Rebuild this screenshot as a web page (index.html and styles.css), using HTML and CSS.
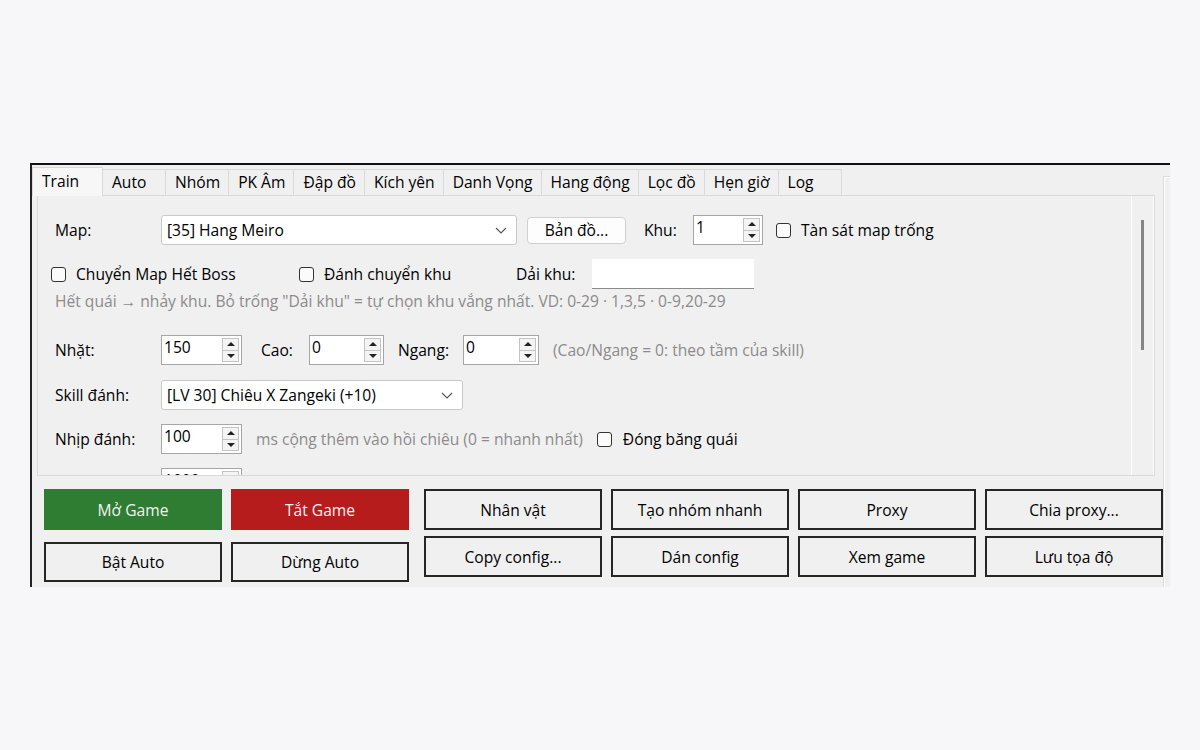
FILE: index.html
```html
<!DOCTYPE html>
<html lang="vi">
<head>
    <meta charset="UTF-8">
    <meta name="viewport" content="width=device-width, initial-scale=1.0">
    <title>Auto - Train</title>
    <link rel="stylesheet" href="styles.css">
</head>
<body>
    <div class="window">
        <div class="main">
            <div class="tabs">
                <div class="tab active">Train</div>
                <div class="tab">Auto</div>
                <div class="tab">Nhóm</div>
                <div class="tab">PK Âm</div>
                <div class="tab">Đập đồ</div>
                <div class="tab">Kích yên</div>
                <div class="tab">Danh Vọng</div>
                <div class="tab">Hang động</div>
                <div class="tab">Lọc đồ</div>
                <div class="tab">Hẹn giờ</div>
                <div class="tab">Log</div>
            </div>

            <div class="tab-panel">
                <div class="scroll-area">
                    <!-- Map -->
                    <div class="row">
                        <span class="label">Map:</span>
                        <div class="combo combo-map">
                            <span class="combo-text">[35] Hang Meiro</span>
                            <svg class="chevron" width="12" height="7" viewBox="0 0 12 7"><polyline points="1,1 6,6 11,1" fill="none" stroke="#555" stroke-width="1.1"/></svg>
                        </div>
                        <button class="small-btn">Bản đồ...</button>
                        <span class="label label-khu">Khu:</span>
                        <div class="spin spin-khu">
                            <span class="spin-value">1</span>
                            <span class="spin-buttons"><span class="spin-up"></span><span class="spin-down"></span></span>
                        </div>
                        <label class="check check-tan"><span class="box"></span>Tàn sát map trống</label>
                    </div>

                    <!-- Chuyển khu -->
                    <div class="row row-checks">
                        <label class="check check-boss"><span class="box"></span>Chuyển Map Hết Boss</label>
                        <label class="check check-khu"><span class="box"></span>Đánh chuyển khu</label>
                        <span class="label label-dai">Dải khu:</span>
                        <div class="text-field"></div>
                    </div>
                    <div class="row-hint">Hết quái → nhảy khu. Bỏ trống "Dải khu" = tự chọn khu vắng nhất. VD: 0-29 · 1,3,5 · 0-9,20-29</div>

                    <!-- Nhặt -->
                    <div class="row row-nhat">
                        <span class="label">Nhặt:</span>
                        <div class="spin spin-wide">
                            <span class="spin-value">150</span>
                            <span class="spin-buttons"><span class="spin-up"></span><span class="spin-down"></span></span>
                        </div>
                        <span class="label label-cao">Cao:</span>
                        <div class="spin spin-cao">
                            <span class="spin-value">0</span>
                            <span class="spin-buttons"><span class="spin-up"></span><span class="spin-down"></span></span>
                        </div>
                        <span class="label label-ngang">Ngang:</span>
                        <div class="spin spin-ngang">
                            <span class="spin-value">0</span>
                            <span class="spin-buttons"><span class="spin-up"></span><span class="spin-down"></span></span>
                        </div>
                        <span class="hint hint-gap">(Cao/Ngang = 0: theo tầm của skill)</span>
                    </div>

                    <!-- Skill -->
                    <div class="row row-skill">
                        <span class="label">Skill đánh:</span>
                        <div class="combo combo-skill">
                            <span class="combo-text">[LV 30] Chiêu X Zangeki (+10)</span>
                            <svg class="chevron" width="12" height="7" viewBox="0 0 12 7"><polyline points="1,1 6,6 11,1" fill="none" stroke="#555" stroke-width="1.1"/></svg>
                        </div>
                    </div>

                    <!-- Nhịp -->
                    <div class="row row-nhip">
                        <span class="label">Nhịp đánh:</span>
                        <div class="spin spin-wide">
                            <span class="spin-value">100</span>
                            <span class="spin-buttons"><span class="spin-up"></span><span class="spin-down"></span></span>
                        </div>
                        <span class="hint hint-gap">ms cộng thêm vào hồi chiêu (0 = nhanh nhất)</span>
                        <label class="check check-bang"><span class="box"></span>Đóng băng quái</label>
                    </div>

                    <!-- bị cắt bởi khung cuộn -->
                    <div class="row row-next">
                        <span class="label"></span>
                        <div class="spin spin-wide">
                            <span class="spin-value">1000</span>
                            <span class="spin-buttons"><span class="spin-up"></span><span class="spin-down"></span></span>
                        </div>
                        <span class="hint hint-gap">ms chờ sau khi nhặt đồ (0 = không chờ)</span>
                    </div>
                </div>
                <div class="scrollbar"><div class="thumb"></div></div>
            </div>

            <div class="actions">
                <div class="left-buttons">
                    <div class="btn-row">
                        <button class="btn btn-green">Mở Game</button>
                        <button class="btn btn-red">Tắt Game</button>
                    </div>
                    <div class="btn-row btn-row-low">
                        <button class="btn">Bật Auto</button>
                        <button class="btn">Dừng Auto</button>
                    </div>
                </div>
                <div class="grid-buttons">
                    <button class="btn">Nhân vật</button>
                    <button class="btn">Tạo nhóm nhanh</button>
                    <button class="btn">Proxy</button>
                    <button class="btn">Chia proxy...</button>
                    <button class="btn">Copy config...</button>
                    <button class="btn">Dán config</button>
                    <button class="btn">Xem game</button>
                    <button class="btn">Lưu tọa độ</button>
                </div>
            </div>
        </div>
        <div class="side"></div>
    </div>
</body>
</html>
```

FILE: styles.css
```css
body {
    margin: 0;
    background-color: #f7f7f9;
    font-family: "Open Sans", "Noto Sans", sans-serif;
    font-size: 15.6px;
    color: #000000;
}

.window {
    margin: 163px 0 0 30px;
    width: 1138px;
    height: 422px;
    border-top: 2px solid #111111;
    border-left: 2px solid #222222;
    background-color: #f0f0f0;
    display: flex;
}

.main {
    width: 1123px;
    display: flex;
    flex-direction: column;
}

.side {
    width: 6px;
    margin: 11px 0 0 8px;
    border-top: 1px solid #dcdcdc;
    border-left: 1px solid #dcdcdc;
    box-shadow: inset 1px 1px 0 #ffffff;
}

/* Вкладки */
.tabs {
    display: flex;
    align-items: flex-end;
    height: 28px;
    margin: 2px 0 0 1px;
    position: relative;
    z-index: 1;
}

.tab {
    height: 26px;
    line-height: 24px;
    box-sizing: border-box;
    padding: 0 8px 0 9px;
    min-width: 64px;
    border: 1px solid #d9d9d9;
    border-bottom: none;
    margin-left: -1px;
    background-color: #f0f0f0;
}

.tab.active {
    height: 29px;
    margin-bottom: -1px;
    min-width: 71px;
    padding: 0 9px;
    background-color: #f7f7f7;
    line-height: 26px;
}

.tab-panel {
    margin-left: 5px;
    width: 1118px;
    height: 281px;
    box-sizing: border-box;
    border: 1px solid #dadada;
    display: flex;
}

.scroll-area {
    flex: 1;
    overflow: hidden;
    padding: 19px 0 0 17px;
}

.scrollbar {
    width: 23px;
    box-sizing: border-box;
    border-left: 1px solid #ffffff;
    border-right: 1px solid #ffffff;
    padding: 24px 0 0 9px;
}

.thumb {
    width: 3px;
    height: 130px;
    background-color: #858585;
}

/* Строки */
.row {
    display: flex;
    align-items: center;
    height: 30px;
    white-space: nowrap;
}

.row-checks { margin: 14px 0 0 -4px; }
.row-nhat { margin-top: 24px; }
.row-skill { margin-top: 15px; }
.row-nhip { margin-top: 14px; }
.row-next { margin-top: 14px; }

.row-hint {
    margin-top: 2px;
    height: 20px;
    line-height: 20px;
    color: #8b8b8b;
    white-space: nowrap;
}

.label {
    width: 106px;
    flex-shrink: 0;
}

.label-khu { width: 49px; margin-left: 18px; }
.label-dai { width: 76px; }
.label-cao { width: 48px; margin-left: 19px; }
.label-ngang { width: 65px; margin-left: 14px; }

.hint {
    color: #8b8b8b;
}

.hint-gap { margin-left: 14px; }

/* Комбобокс */
.combo {
    display: flex;
    align-items: center;
    height: 30px;
    box-sizing: border-box;
    border: 1px solid #c9c9c9;
    border-radius: 3px;
    background-color: #ffffff;
    padding: 0 9px 0 5px;
}

.combo-map { width: 356px; }
.combo-skill { width: 302px; }

.combo-text {
    flex: 1;
}

.small-btn {
    width: 99px;
    height: 27px;
    margin-left: 10px;
    font-family: inherit;
    font-size: 15.6px;
    color: #000000;
    background-color: #fdfdfd;
    border: 1px solid #d0d0d0;
    border-radius: 4px;
    padding: 0;
}

/* Числовое поле */
.spin {
    display: flex;
    height: 30px;
    box-sizing: border-box;
    border: 1px solid #a6a6a6;
    background-color: #ffffff;
}

.spin-khu { width: 70px; }
.spin-wide { width: 81px; }
.spin-cao { width: 75px; }
.spin-ngang { width: 76px; }

.spin-value {
    flex: 1;
    padding: 1px 0 0 2px;
    line-height: 20px;
}

.spin-buttons {
    width: 17px;
    display: flex;
    flex-direction: column;
    padding: 2px 2px 2px 0;
}

.spin-up,
.spin-down {
    flex: 1;
    display: flex;
    align-items: center;
    justify-content: center;
    border: 1px solid #c4c4c4;
    background-color: #f4f4f4;
}

.spin-up { border-bottom: none; }

.spin-up::after {
    content: '';
    border-left: 4px solid transparent;
    border-right: 4px solid transparent;
    border-bottom: 4px solid #222222;
}

.spin-down::after {
    content: '';
    border-left: 4px solid transparent;
    border-right: 4px solid transparent;
    border-top: 4px solid #222222;
}

/* Чекбоксы */
.check {
    display: flex;
    align-items: center;
}

.box {
    width: 15px;
    height: 15px;
    box-sizing: border-box;
    border: 1px solid #333333;
    border-radius: 3px;
    background-color: #fbfbfb;
    margin-right: 10px;
    flex-shrink: 0;
}

.check-tan { margin-left: 13px; }
.check-boss { width: 248px; }
.check-khu { width: 217px; }
.check-bang { margin-left: 14px; }
.check-bang .box { margin-right: 11px; }

.text-field {
    width: 162px;
    height: 30px;
    box-sizing: border-box;
    background-color: #ffffff;
    border-bottom: 1px solid #8a8a8a;
}

/* Кнопки внизу */
.actions {
    display: flex;
    gap: 15px;
    padding: 13px 0 0 12px;
}

.left-buttons {
    display: flex;
    flex-direction: column;
    gap: 12px;
}

.btn-row {
    display: flex;
    gap: 9px;
    height: 41px;
}

.btn-row-low { height: 40px; }

.grid-buttons {
    display: grid;
    grid-template-columns: repeat(4, 178px);
    grid-auto-rows: 41px;
    column-gap: 9px;
    row-gap: 6px;
}

.btn {
    width: 178px;
    box-sizing: border-box;
    font-family: inherit;
    font-size: 15.6px;
    color: #000000;
    background-color: #f0f0f0;
    border: 2px solid #262626;
    padding: 0;
}

.btn-green {
    background-color: #2e7d32;
    border-color: #2e7d32;
    color: #f2f2f2;
}

.btn-red {
    background-color: #b71c1c;
    border-color: #b71c1c;
    color: #f2f2f2;
}
```
